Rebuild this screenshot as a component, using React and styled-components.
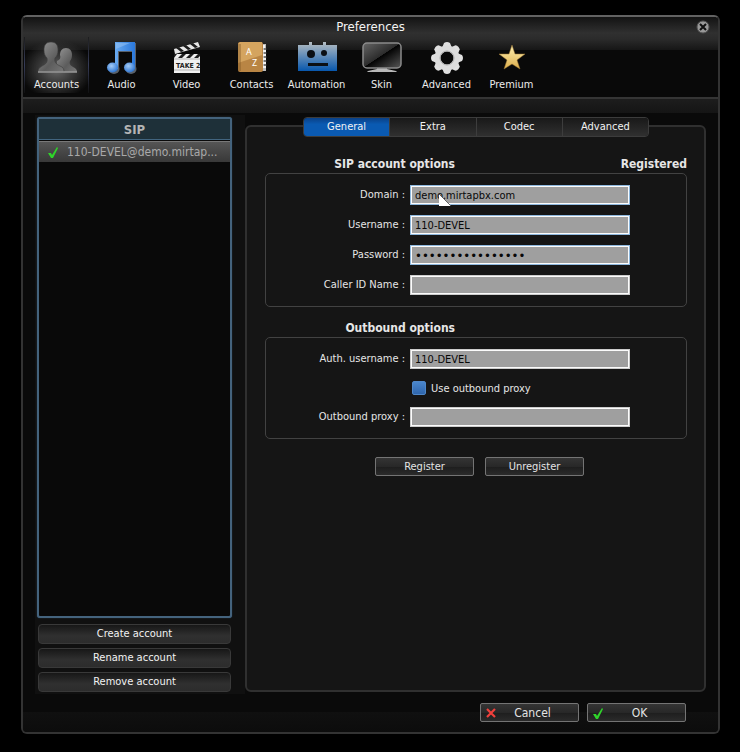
import React from "react";
import styled, { createGlobalStyle, css } from "styled-components";

const Global = createGlobalStyle`
  * { box-sizing: border-box; }
  body { margin: 0; background: #000; }
  body, button, input { font-family: "DejaVu Sans Condensed", "Noto Sans", Tahoma, sans-serif; font-size: 11px; color: #e6e6e6; }
  button { cursor: pointer; }
`;

const Page = styled.div`
  min-height: 100vh;
  padding: 15px 20px 18px 21px;
  display: flex;
  flex-direction: column;
`;

const Window = styled.main`
  flex: 1;
  display: flex;
  flex-direction: column;
  border: 2px solid #333;
  border-top-color: #626262;
  border-radius: 6px;
  background: #0a0a0a;
  overflow: hidden;
`;

const Top = styled.header`
  background: linear-gradient(#131313 0, #303030 16px, #2b2b2b 22px, #161616 33px, #090909 33px);
  border-bottom: 2px solid #353535;
`;

const TitleBar = styled.div`
  display: grid;
  grid-template-columns: 1fr auto 1fr;
  align-items: center;
  height: 20px;
  padding: 0 8px;
`;

const Title = styled.h1`
  grid-column: 2;
  margin: 0;
  font-size: 13px;
  line-height: 16px;
  font-weight: normal;
  color: #f4f4f4;
`;

const CloseButton = styled.button`
  justify-self: end;
  display: flex;
  padding: 0;
  border: 0;
  background: none;
`;

const Toolbar = styled.nav`
  display: flex;
  flex-wrap: wrap;
  padding: 0 1px 4px;
`;

const ToolButton = styled.button`
  width: 65px;
  height: 56px;
  padding: 4px 0 0;
  border: 0;
  display: flex;
  flex-direction: column;
  align-items: center;
  gap: 2px;
  line-height: 16px;
  color: #ececec;
  background: none;
  ${(p) => p.$active && css`
    border: solid;
    border-width: 0 1px;
    border-image: linear-gradient(#1c1c1c, #363c58 50%, #101010) 1;
    background: radial-gradient(ellipse 36px 30px at 50% 58%, #686868, #3a3a3a 45%, transparent);
  `}
`;

const Strip = styled.div`
  height: 14px;
  background: linear-gradient(#1d1d1d, #151515);
`;

const Body = styled.div`
  flex: 1;
  display: flex;
  padding: 2px 12px 0;
`;

const Sidebar = styled.aside`
  flex: 0 1 210px;
  min-width: 0;
  display: flex;
  flex-direction: column;
  gap: 4px;
  padding: 2px 14px 2px 3px;
  background: #101010;
`;

const AccountList = styled.section`
  flex: 1;
  margin: 0 -1px 2px;
  border: 2px solid #44637d;
  border-radius: 3px;
  box-shadow: 0 0 1px #3d6486;
  background: #090909;
`;

const ListHeader = styled.h2`
  margin: 0;
  height: 21px;
  border-bottom: 1px solid #426580;
  background: #1e3039;
  font-size: 13px;
  line-height: 22px;
  text-align: center;
  color: #b4b4b4;
`;

const AccountRow = styled.button`
  width: 100%;
  height: 21px;
  margin-top: 1px;
  padding: 0 8px;
  border: 0;
  border-top: 1px solid #787878;
  display: flex;
  align-items: center;
  gap: 8px;
  background: linear-gradient(#555, #383838);
  font-size: 12px;
  color: #a9a9a9;
  span { white-space: nowrap; }
`;

const WideButton = styled.button`
  height: 20px;
  padding: 0;
  border: 1px solid #393939;
  border-radius: 4px;
  background: linear-gradient(#171717, #303030 60%, #2c2c2c);
  line-height: 18px;
  color: #f2f2f2;
`;

const Main = styled.section`
  flex: 1;
  min-width: 0;
  display: flex;
  flex-direction: column;
  padding: 10px 0 2px;
`;

const Panel = styled.div`
  flex: 1;
  border: 2px solid #303030;
  border-radius: 6px;
  background: #151515;
  padding: 0 17px 20px 18px;
`;

const Tabs = styled.div`
  display: flex;
  width: 346px;
  max-width: 100%;
  height: 20px;
  margin: -10px auto 18px;
  border: 1px solid #3c3c3c;
  border-radius: 4px;
  overflow: hidden;
`;

const Tab = styled.button`
  flex: 1;
  padding: 0;
  border: 0;
  border-left: 1px solid #3d3d3d;
  background: linear-gradient(#191919, #303030);
  line-height: 18px;
  color: #f2f2f2;
  &:first-child { border-left: 0; }
  ${(p) => p.$active && css`background: linear-gradient(#0a4086, #0a5ab2 35%);`}
`;

const SectionHead = styled.div`
  display: flex;
  justify-content: space-between;
  font-size: 12px;
  line-height: 18px;
  font-weight: bold;
`;

const SectionTitle = styled.h2`
  margin: 0;
  width: 190px;
  font-size: 12px;
  text-align: right;
`;

const Group = styled.div`
  display: grid;
  gap: 10px;
  padding: 11px;
  margin-bottom: 12px;
  border: 1px solid #424242;
  border-radius: 5px;
`;

const Row = styled.div`
  position: relative;
  display: grid;
  grid-template-columns: 128px minmax(0, 220px);
  gap: 5px;
  align-items: center;
  label { text-align: right; line-height: 20px; white-space: nowrap; }
`;

const TextInput = styled.input`
  width: 100%;
  height: 20px;
  padding: 0 3px;
  border: 2px solid #fbfbfb;
  outline: 1px solid ${(p) => (p.$blue ? "#8fb9df" : "#ccc")};
  outline-offset: -1px;
  background: #9f9f9f;
  color: #080808;
  &[type="password"] { font-size: 13px; }
`;

const Pointer = styled.svg`
  position: absolute;
  left: 162px;
  top: 9px;
`;

const CheckRow = styled.div`
  display: flex;
  align-items: center;
  gap: 5px;
  height: 18px;
  padding-left: 135px;
`;

const Check = styled.input`
  appearance: none;
  width: 14px;
  height: 14px;
  margin: 0;
  border-radius: 2px;
  border: 1px solid #4f87c8;
  background: linear-gradient(#4a86cc, #2f66ad);
`;

const Actions = styled.div`
  display: flex;
  gap: ${(p) => p.$gap};
  padding: ${(p) => p.$pad};
  justify-content: ${(p) => p.$align};
`;

const ActionButton = styled.button`
  width: 99px;
  height: 19px;
  padding: 0 4px;
  border: 1px solid #747474;
  border-radius: 2px;
  display: grid;
  grid-template-columns: ${(p) => (p.$icon ? "12px 1fr 6px" : "1fr")};
  align-items: center;
  background: linear-gradient(#343434, #282828 50%, #1e1e1e 54%, #2b2b2b);
  font-size: ${(p) => (p.$icon ? "12px" : "11px")};
  line-height: 16px;
  color: #e4e4e4;
`;

const Footer = styled.footer`
  background: linear-gradient(#0a0a0a 18px, #101010 18px, #0c0c0c);
`;

function AccountsIcon() {
  return (
    <svg width="40" height="34" viewBox="0 0 40 34" aria-hidden="true">
      <defs>
        <linearGradient id="acc" x1="0" y1="0" x2="1" y2="1"><stop stopColor="#969696" /><stop offset=".6" stopColor="#5c5c5c" /><stop offset="1" stopColor="#777" /></linearGradient>
      </defs>
      <path fill="url(#acc)" d="M29 7c4 0 6 3 6 7 0 3-1 5-2 6-1 3 0 4 3 6 3 1 4 3 4 5H20V20c3-1 4-3 3-6 0-4 2-7 6-7z" />
      <path fill="url(#acc)" stroke="#3c3c3c" strokeWidth=".6" d="M14 1c5 0 7 3 7 8 0 4-1 6-3 8-1 4 1 6 5 8 3 1 4 3 4 6H1c0-3 1-4 4-6 4-2 6-4 5-8-2-2-3-4-3-8 0-5 2-8 7-8z" />
      <path stroke="#999" strokeWidth="1.500" d="M1 31h39" />
    </svg>
  );
}

function AudioIcon() {
  const note = "M9 1h20v27h-3V10H12v18H9z";
  return (
    <svg width="32" height="34" viewBox="0 0 32 34" aria-hidden="true">
      <defs>
        <linearGradient id="bar" x1="0" y1="0" x2="1" y2="0"><stop stopColor="#69aaf0" /><stop offset="1" stopColor="#2a78dc" /></linearGradient>
        <radialGradient id="head" cx=".4" cy=".35" r=".7"><stop stopColor="#a4cbf5" /><stop offset="1" stopColor="#2670d0" /></radialGradient>
      </defs>
      <g fill="#59616b" transform="translate(1 1)">
        <path d={note} /><ellipse cx="7" cy="27" rx="5.500" ry="5" /><ellipse cx="24" cy="27" rx="5.500" ry="5" />
      </g>
      <path fill="url(#bar)" d={note} />
      <path fill="#9cc6f4" d="M10 2h14L10 8z" opacity=".5" />
      <ellipse cx="6.500" cy="26.500" rx="5.500" ry="5" fill="url(#head)" />
      <ellipse cx="23.500" cy="26.500" rx="5.500" ry="5" fill="url(#head)" />
    </svg>
  );
}

function VideoIcon() {
  return (
    <svg width="30" height="34" viewBox="0 0 30 34" aria-hidden="true">
      <path fill="#e8e8e8" d="M2 8 26 1l2 5L3 13z" />
      <path fill="#1c1c1c" d="m4 7 5 4 3-1-5-4zm7-2 5 4 3-1-5-4zm7-2 5 4 3-1-5-4z" />
      <path fill="#f0f0f0" d="M2 13h26v19H2z" />
      <path fill="#1d1d1d" d="M2 13h3l-3 4zm8 0h4l-4 4H6zm8 0h4l-4 4h-4zm8 0h2v2l-2 2h-4z" />
      <path stroke="#b4b4b4" d="M2 18h26M2 29h26" />
      <text x="4" y="27" fontFamily="DejaVu Sans Condensed" fontSize="7" fontWeight="bold" fill="#222">TAKE 2</text>
    </svg>
  );
}

function ContactsIcon() {
  return (
    <svg width="30" height="34" viewBox="0 0 30 34" aria-hidden="true">
      <path fill="#bdbdbd" d="M25 3h4v27h-4z" />
      <path fill="#f2f2f2" d="M26 4h2v3h-2zm0 5h3v2h-3zm0 4h3v2h-3zm0 4h3v2h-3zm0 4h3v2h-3zm0 4h3v2h-3z" />
      <path stroke="#333" d="M27 8h3m-3 4h3m-3 4h3m-3 4h3m-3 4h3" />
      <rect x="1" y="1" width="25" height="30" rx="2" fill="#b98544" />
      <path fill="#d4a45f" d="M3 1h22v13L1 22V3z" />
      <path fill="#7e5524" d="M1 3h3v27H1z" opacity=".4" />
      <text x="9" y="14" fontFamily="Noto Sans" fontSize="9" fill="#fff">A</text>
      <text x="15" y="25" fontFamily="Noto Sans" fontSize="9" fill="#fff">Z</text>
    </svg>
  );
}

function AutomationIcon() {
  return (
    <svg width="40" height="34" viewBox="0 0 40 34" aria-hidden="true">
      <defs><linearGradient id="bot" x1="0" y1="0" x2="0" y2="1"><stop stopColor="#b5bdc2" /><stop offset="1" stopColor="#0757ad" /></linearGradient></defs>
      <path fill="url(#bot)" d="M1 4h11V1h3v3h11V1h3v3h11v26H1z" />
      <g fill="#0b0f14"><circle cx="14" cy="13" r="4" /><circle cx="27" cy="12" r="3" /><path d="M11 22h20v3H11z" /></g>
    </svg>
  );
}

function SkinIcon() {
  return (
    <svg width="40" height="34" viewBox="0 0 40 34" aria-hidden="true">
      <defs><linearGradient id="scr" x1="0" y1="0" x2="1" y2="1"><stop stopColor="#666" /><stop offset=".49" stopColor="#2c2c2c" /><stop offset=".5" stopColor="#030303" /><stop offset="1" stopColor="#585858" /></linearGradient></defs>
      <path fill="#b9b9b9" d="M15 26h10v2l9 2 1 1H5l1-1 9-2z" />
      <rect x="1" y="2" width="38" height="25" rx="4" fill="url(#scr)" stroke="#8b8b8b" strokeWidth="1.500" />
    </svg>
  );
}

function GearIcon() {
  return (
    <svg width="34" height="34" viewBox="-17 -17 34 34" aria-hidden="true">
      <g fill="#e0e0e0">
        {[0, 45, 90, 135, 180, 225, 270, 315].map((a) => (
          <path key={a} transform={`rotate(${a})`} d="M-5-10-3-15Q0-17 3-15L5-10z" />
        ))}
      </g>
      <circle r="9.500" fill="none" stroke="#dcdcdc" strokeWidth="6" />
      <circle r="7" fill="none" stroke="#aaa" />
    </svg>
  );
}

function StarIcon() {
  return (
    <svg width="30" height="34" viewBox="0 0 30 34" aria-hidden="true">
      <defs><linearGradient id="star" x1="0" y1="0" x2="0" y2="1"><stop stopColor="#fff0b0" /><stop offset="1" stopColor="#dcae4c" /></linearGradient></defs>
      <path fill="url(#star)" stroke="#9b7430" strokeWidth=".5" d="m15 4 3 9h10l-8 6 3 9-8-5-8 5 3-9-8-6h10z" />
    </svg>
  );
}

function Tick() {
  return (
    <svg width="12" height="12" viewBox="0 0 12 12" aria-hidden="true">
      <path d="M1 7h3l1 2 5-8 1 1-5 10H4z" fill="#2fd32a" />
    </svg>
  );
}

function Cross() {
  return (
    <svg width="12" height="12" viewBox="0 0 12 12" aria-hidden="true">
      <path d="m2 2 8 8m0-8-8 8" stroke="#f0403c" strokeWidth="2.200" />
    </svg>
  );
}

const tools = [
  ["Accounts", AccountsIcon],
  ["Audio", AudioIcon],
  ["Video", VideoIcon],
  ["Contacts", ContactsIcon],
  ["Automation", AutomationIcon],
  ["Skin", SkinIcon],
  ["Advanced", GearIcon],
  ["Premium", StarIcon],
];

function Field({ id, label, value = "", type = "text", blue, children }) {
  return (
    <Row>
      <label htmlFor={id}>{label} :</label>
      <TextInput id={id} type={type} defaultValue={value} $blue={blue} />
      {children}
    </Row>
  );
}

export default function App() {
  return (
    <Page>
      <Global />
      <Window>
        <Top>
          <TitleBar>
            <Title>Preferences</Title>
            <CloseButton aria-label="Close">
              <svg width="14" height="14" viewBox="0 0 14 14">
                <circle cx="7" cy="7" r="6" fill="#999" stroke="#555" />
                <path d="m4 4 6 6m0-6-6 6" stroke="#111" strokeWidth="2" />
              </svg>
            </CloseButton>
          </TitleBar>
          <Toolbar>
            {tools.map(([name, Icon], i) => (
              <ToolButton key={name} $active={i === 0}><Icon />{name}</ToolButton>
            ))}
          </Toolbar>
        </Top>
        <Strip />
        <Body>
          <Sidebar>
            <AccountList>
              <ListHeader>SIP</ListHeader>
              <AccountRow><Tick /><span>110-DEVEL@demo.mirtap...</span></AccountRow>
            </AccountList>
            <WideButton>Create account</WideButton>
            <WideButton>Rename account</WideButton>
            <WideButton>Remove account</WideButton>
          </Sidebar>
          <Main>
            <Panel>
              <Tabs>
                {["General", "Extra", "Codec", "Advanced"].map((t, i) => (
                  <Tab key={t} $active={i === 0}>{t}</Tab>
                ))}
              </Tabs>
              <SectionHead><SectionTitle>SIP account options</SectionTitle><span>Registered</span></SectionHead>
              <Group>
                <Field id="domain" label="Domain" value="demo.mirtapbx.com" blue>
                  <Pointer width="12" height="12" viewBox="0 0 12 12" aria-hidden="true">
                    <path d="M0 0v12h12z" fill="#fff" />
                    <path d="m0 0 12 12" stroke="#444" strokeWidth=".8" />
                  </Pointer>
                </Field>
                <Field id="username" label="Username" value="110-DEVEL" blue />
                <Field id="password" label="Password" value="abcdefghijklmnop" type="password" blue />
                <Field id="caller" label="Caller ID Name" />
              </Group>
              <SectionHead><SectionTitle>Outbound options</SectionTitle></SectionHead>
              <Group>
                <Field id="auth" label="Auth. username" value="110-DEVEL" />
                <CheckRow>
                  <Check id="useproxy" type="checkbox" />
                  <label htmlFor="useproxy">Use outbound proxy</label>
                </CheckRow>
                <Field id="proxy" label="Outbound proxy" />
              </Group>
              <Actions $gap="11px" $pad="6px 0 0 110px" $align="flex-start">
                <ActionButton>Register</ActionButton>
                <ActionButton>Unregister</ActionButton>
              </Actions>
            </Panel>
          </Main>
        </Body>
        <Footer>
          <Actions $gap="8px" $pad="9px 32px 10px" $align="flex-end">
            <ActionButton $icon><Cross />Cancel</ActionButton>
            <ActionButton $icon><Tick />OK</ActionButton>
          </Actions>
        </Footer>
      </Window>
    </Page>
  );
}
